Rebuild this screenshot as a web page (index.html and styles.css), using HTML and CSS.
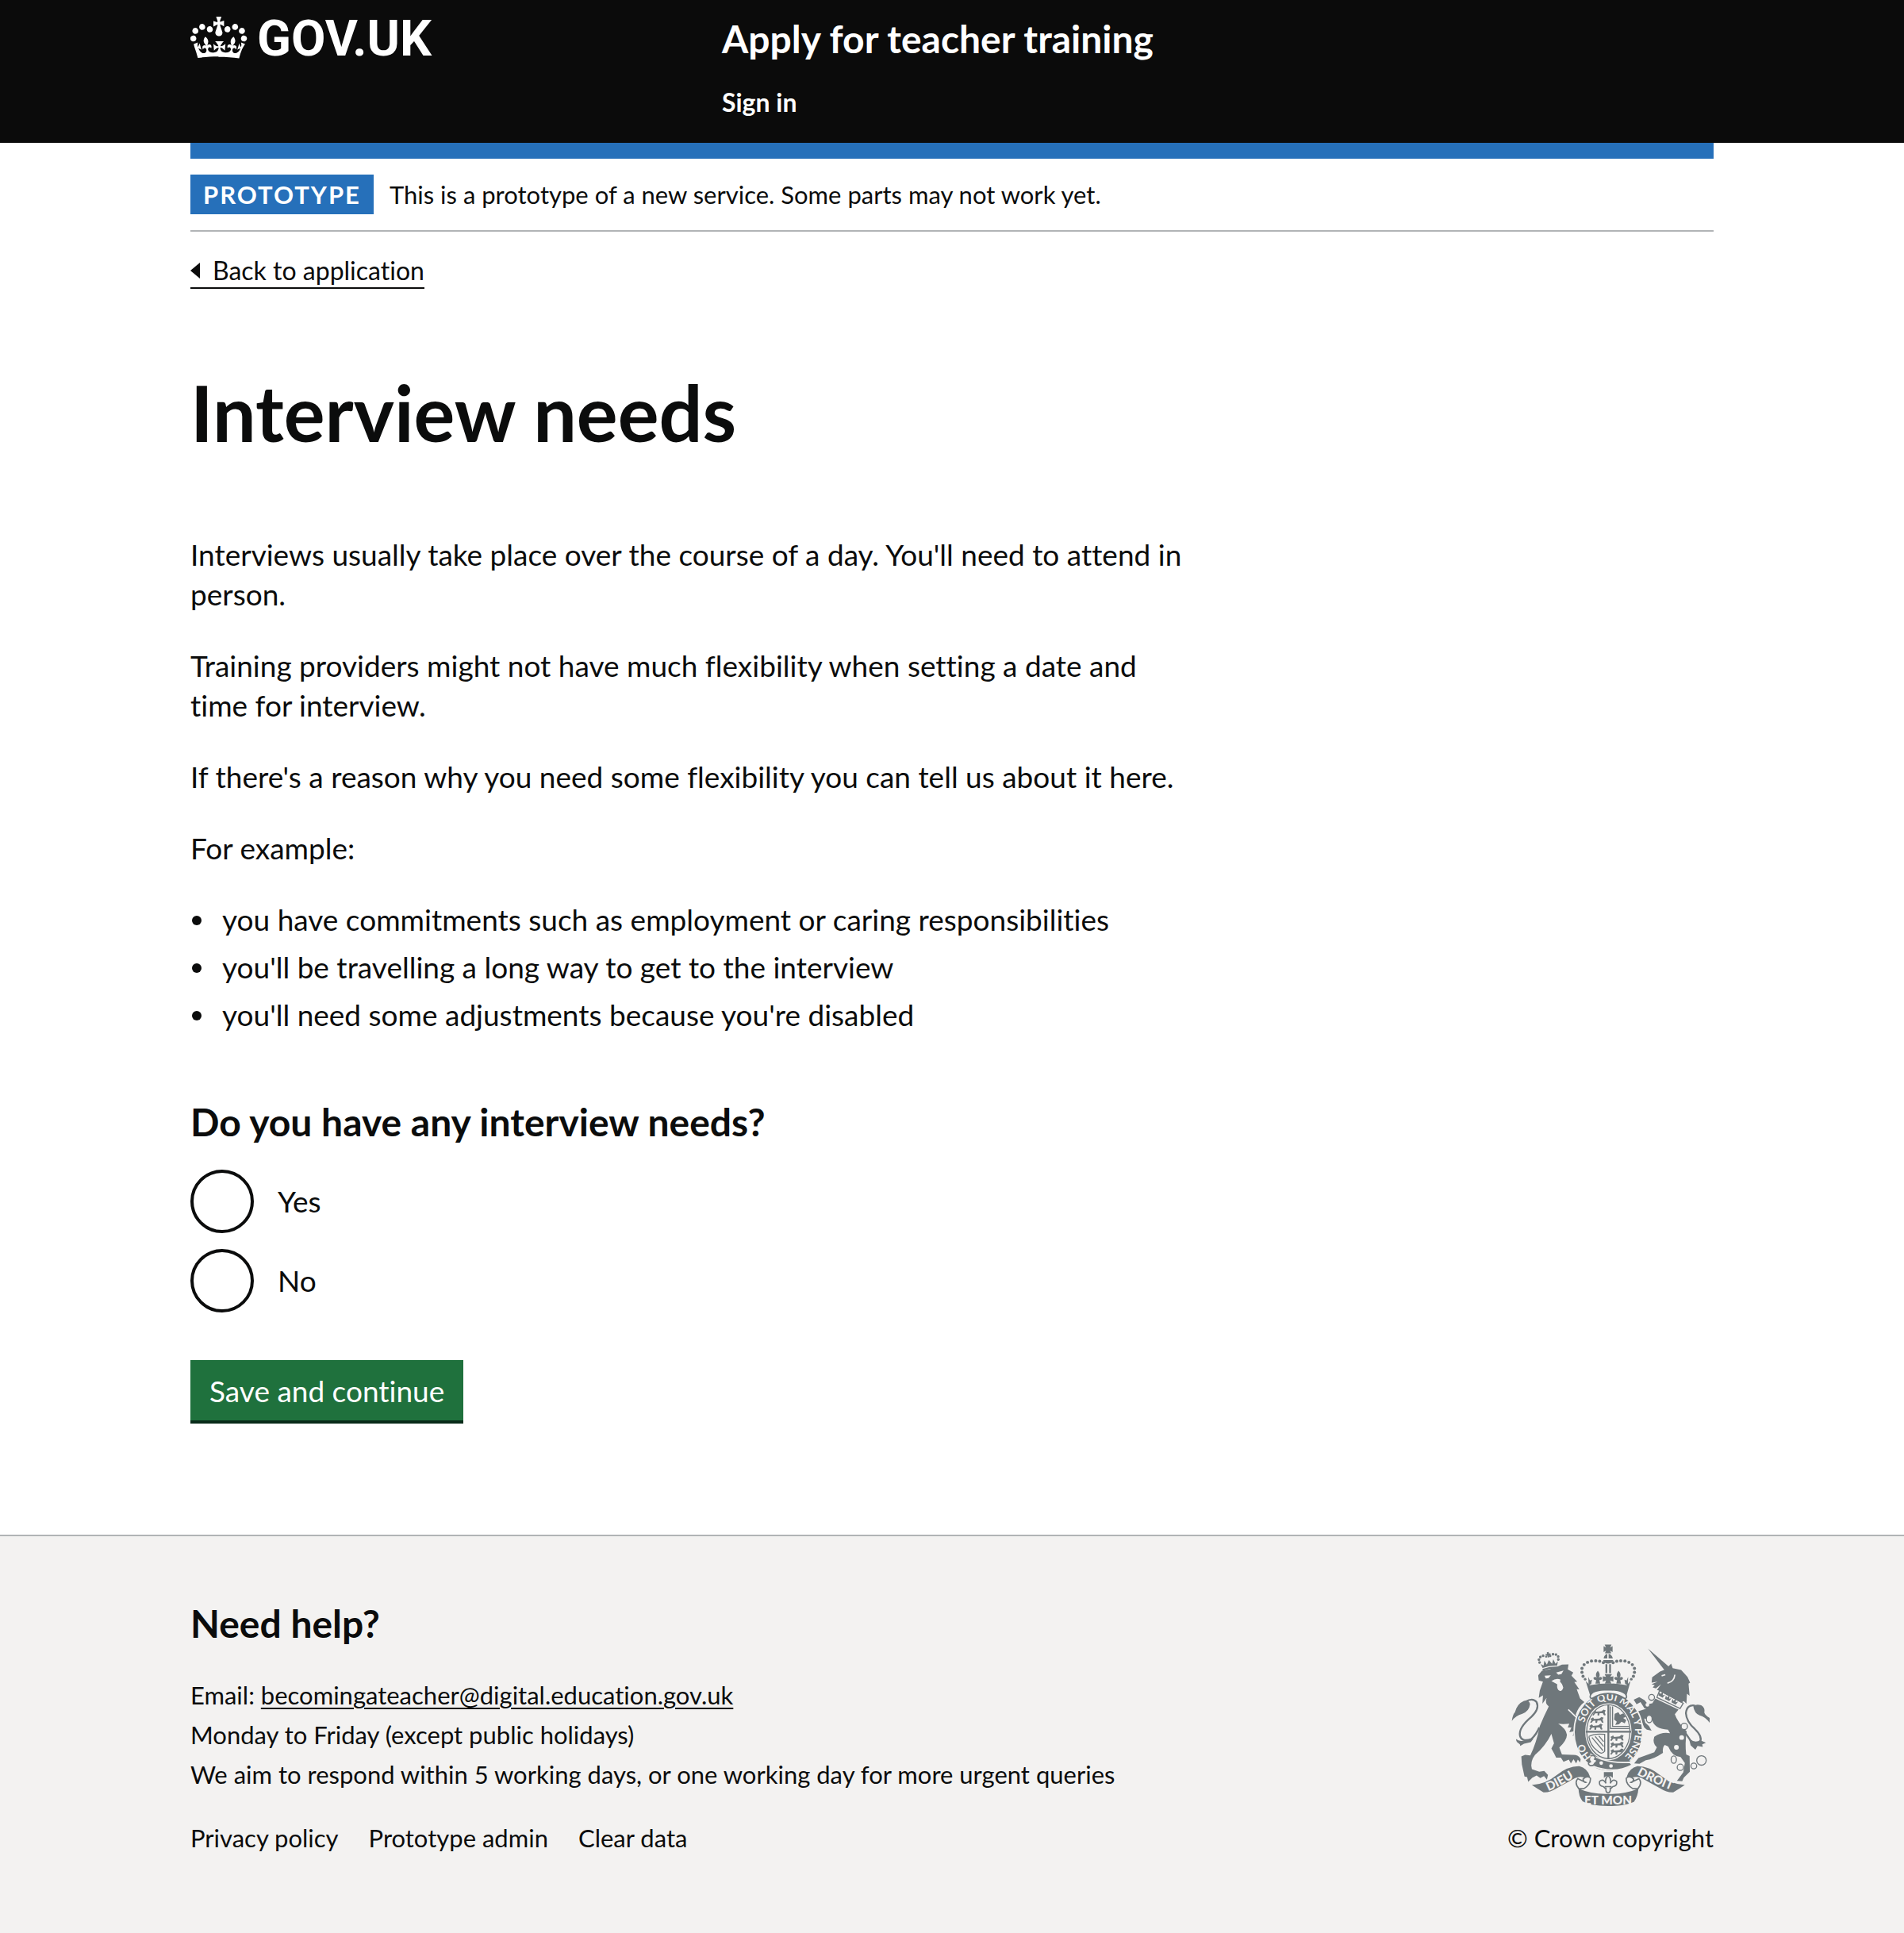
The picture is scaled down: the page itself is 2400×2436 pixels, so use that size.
FILE: index.html
```html
<!DOCTYPE html>
<html lang="en">
<head>
<meta charset="utf-8">
<meta name="viewport" content="width=device-width, initial-scale=1">
<title>Interview needs - Apply for teacher training - GOV.UK</title>
<link rel="stylesheet" href="styles.css">
</head>
<body>
<header class="header">
  <div class="container header-grid">
    <a class="logo" href="#">
      <svg class="crown" viewBox="0 4 36 26" aria-hidden="true"><path fill="currentColor" d="M6.7 12.2c1 .4 2.1-.1 2.5-1s-.1-2.1-1-2.5c-1-.4-2.1.1-2.5 1-.4 1 0 2.1 1 2.5m-4.3 2.5c1 .4 2.1-.1 2.5-1s-.1-2.1-1-2.5c-1-.4-2.1.1-2.5 1-.5 1 0 2.1 1 2.5m-1.3 4.8c1 .4 2.1-.1 2.5-1 .4-1-.1-2.1-1-2.5-1-.4-2.1.1-2.5 1-.4 1 0 2.1 1 2.5m10.4-5.8c1 .4 2.1-.1 2.5-1s-.1-2.1-1-2.5c-1-.4-2.1.1-2.5 1s0 2.1 1 2.5m17.4-1.5c-1 .4-2.1-.1-2.5-1s.1-2.1 1-2.5c1-.4 2.1.1 2.5 1 .5 1 0 2.1-1 2.5m4.3 2.5c-1 .4-2.1-.1-2.5-1s.1-2.1 1-2.5c1-.4 2.1.1 2.5 1 .5 1 0 2.1-1 2.5m1.3 4.8c-1 .4-2.1-.1-2.5-1-.4-1 .1-2.1 1-2.5 1-.4 2.1.1 2.5 1 .4 1 0 2.1-1 2.5m-10.4-5.8c-1 .4-2.1-.1-2.5-1s.1-2.1 1-2.5c1-.4 2.1.1 2.5 1s0 2.1-1 2.5m-5.3-4.9 2.4 1.3V6.5l-2.4.8c-.1-.1-.1-.2-.2-.3s1-3 1-3h-3.4l1 3c-.1.1-.2.1-.2.2-.1.1-.1.2-.1.3l-2.4-.7v3.5L17 9c.1.1.2.2.2.3l-1.4 4.2c-.1.2-.1.4-.1.6 0 1.1.8 2 1.9 2.2h.7c1-.2 1.9-1.1 1.9-2.1 0-.2 0-.4-.1-.6l-1.4-4.2c0-.1.1-.2.2-.3m-1 20.3c4.6 0 8.9.3 12.8.9 1.1-4.6 2.4-7.2 3.8-9.1l-2.6-.9c.3 1.3.3 1.9 0 2.8-.4-.4-.8-1.2-1.1-2.4l-1.2 4.2c.8-.5 1.4-.9 2-.9-1.2 2.6-2.7 3.2-3.6 3-1.2-.2-1.7-1.3-1.5-2.2.3-1.3 1.6-1.6 2.2-.1 1.2-2.4-.8-3.1-2.1-2.4 2-1.9 2.2-3.6.6-5.7-2.2 1.7-2.2 3.3-1.2 5.6-1.3-1.5-3.3-.7-2.5 1.7.9-1.4 2.1-.5 2 .8-.2 1.2-1.7 2.1-3.7 1.9-2.8-.3-2.9-2.2-3-3.1.7-.1 1.9.5 2.9 1.9l.4-4.3c-1.1 1.1-2.1 1.4-3.2 1.5.4-1.2 2.1-3.1 2.1-3.1h-5.4s1.8 1.9 2.1 3.1c-1.1 0-2.1-.2-3.2-1.5l.4 4.3c1-1.4 2.2-2 2.9-1.9-.1.9-.2 2.8-3 3.1-1.9.2-3.5-.7-3.7-1.9-.1-1.3 1.1-2.2 2-.8.8-2.4-1.2-3.2-2.5-1.7 1-2.2 1-3.9-1.2-5.6-1.6 2-1.4 3.8.6 5.7-1.3-.7-3.2 0-2.1 2.4.6-1.4 2-1.1 2.2.1.2.9-.3 2-1.5 2.2-.9.2-2.4-.5-3.6-3 .6 0 1.2.4 2 .9l-1.2-4.2c-.4 1.1-.8 1.9-1.1 2.4-.3-.9-.2-1.5 0-2.8l-2.6.9C2.3 22.9 3.6 25.5 4.7 30c3.9-.6 8.2-.9 12.8-.9"/></svg>
      <span>GOV.UK</span>
    </a>
    <div>
      <a class="service-name" href="#">Apply for teacher training</a>
      <nav><a class="nav-link" href="#">Sign in</a></nav>
    </div>
  </div>
</header>

<div class="container">
  <div class="phase-banner">
    <strong class="tag">PROTOTYPE</strong>
    <span>This is a prototype of a new service. Some parts may not work yet.</span>
  </div>
  <a class="back-link" href="#">Back to application</a>

  <main class="main">
    <h1>Interview needs</h1>
    <p>Interviews usually take place over the course of a day. You'll need to attend in person.</p>
    <p>Training providers might not have much flexibility when setting a date and time for interview.</p>
    <p>If there's a reason why you need some flexibility you can tell us about it here.</p>
    <p>For example:</p>
    <ul class="bullets">
      <li>you have commitments such as employment or caring responsibilities</li>
      <li>you'll be travelling a long way to get to the interview</li>
      <li>you'll need some adjustments because you're disabled</li>
    </ul>
    <form>
      <fieldset>
        <legend>Do you have any interview needs?</legend>
        <div class="radios">
          <div class="radio"><input type="radio" name="needs" id="needs-yes"><label for="needs-yes">Yes</label></div>
          <div class="radio"><input type="radio" name="needs" id="needs-no"><label for="needs-no">No</label></div>
        </div>
      </fieldset>
      <button class="button" type="button">Save and continue</button>
    </form>
  </main>
</div>

<footer class="footer">
  <div class="container footer-row">
    <div>
      <h2>Need help?</h2>
      <address>
        Email: <a class="email" href="mailto:becomingateacher@digital.education.gov.uk">becomingateacher@digital.education.gov.uk</a><br>
        Monday to Friday (except public holidays)<br>
        We aim to respond within 5 working days, or one working day for more urgent queries
      </address>
      <ul class="footer-links">
        <li><a href="#">Privacy policy</a></li>
        <li><a href="#">Prototype admin</a></li>
        <li><a href="#">Clear data</a></li>
      </ul>
    </div>
    <a class="copyright" href="#">
      <svg class="arms" viewBox="70 65 752 615" aria-hidden="true">
        <defs>
          <path id="garter-top" d="M347 362A98 118 0 1 1 496 493"/>
          <path id="garter-left" d="M374 492A98 118 0 0 1 341 418"/>
          <path id="ribbon-left" d="M211 621Q262 600 330 556"/>
          <path id="ribbon-right" d="M546 558Q610 594 700 626"/>
          <clipPath id="shield"><ellipse cx="438" cy="396" rx="80" ry="100"/></clipPath>
          <g id="arch">
            <circle cx="350" cy="197" r="5"/><circle cx="342" cy="186" r="6"/><circle cx="338" cy="171" r="6"/><circle cx="338" cy="156" r="6"/><circle cx="346" cy="142" r="6"/><circle cx="359" cy="133" r="6"/><circle cx="374" cy="128" r="6"/><circle cx="390" cy="127" r="6"/><circle cx="405" cy="129" r="6"/><circle cx="419" cy="134" r="6"/>
            <path d="M398 165q12 14 4 26q8-7 13 2q-2 9-11 7l3 14h-18l3-14q-9 2-11-7q5-9 13-2q-8-12 4-26zM362 188l6 14 8-3-3 16-10 4z"/>
          </g>
          <path id="passant" d="M0 8l10-6 4 6 20-2 8-6 8 3-4 8 4 10-6 1-5-8-12 0-2 9-6-1 0-8-9 1-6 8-5-2 5-8z"/>
          <path id="collar-crown" d="M0 18l-3-14 7 6 5-12 5 12 7-6-3 14z"/>
        </defs>

        <!-- lion -->
        <g transform="rotate(-9 214 135)">
          <circle cx="178" cy="128" r="5"/><circle cx="177" cy="117" r="5"/><circle cx="184" cy="108" r="5"/><circle cx="195" cy="105" r="5"/><circle cx="206" cy="110" r="4"/><circle cx="222" cy="110" r="4"/><circle cx="233" cy="105" r="5"/><circle cx="244" cy="108" r="5"/><circle cx="251" cy="117" r="5"/><circle cx="250" cy="128" r="5"/>
          <path d="M211 94h7v6h6v7h-6v7h-7v-7h-6v-7h6zM181 134l10 8 6-18 7 16 10-16 10 16 7-16 6 18 10-8-5 16q-28-6-56 0zM185 154q29-6 58 0v7q-29-6-58 0z"/>
        </g>
        <path d="M172 182L186 165Q226 160 262 142L287 141L284 160L305 172L298 184L320 206L309 208L328 236L318 235L331 270L347 284Q325 300 314 332L338 352L344 392L348 408L336 428L328 414L314 426L318 408L303 412L308 394L290 398L298 380L284 380L290 366Q265 368 248 366Q278 385 281 408Q280 430 252 456L262 482L300 484Q325 482 333 500L331 512L322 502L316 516L306 500L296 516L288 502L268 510L258 494L240 494L232 478L222 460L232 440L222 404Q200 450 160 484Q140 510 148 538L176 548L195 545L209 560L205 578L194 564L180 572L166 562L150 570L134 586L130 568L120 566L110 520L108 490L122 484L142 486Q165 440 178 375Q192 340 212 300Q196 290 204 268L188 290L190 258L174 268L178 240L190 206L174 202Z"/>
        <path class="gap" d="M196 184l24-2-9 11-10 1zM240 172l28-8-8 14-12 2zM222 204q18-13 34-6l-1 9q8 6 12 22q-4 15-14 12q-11-5-9-25z"/>
        <path class="gap-line" d="M286 312l50 48"/>
        <path d="M72 355Q76 328 84 322Q92 290 118 279Q140 277 141 292Q138 318 112 328Q85 336 72 355ZM88 424q14 12 34 4l32-6-10 14-26 6-14 8q0-8-6-10-10-4-10-16z"/>
        <path class="line" d="M124 282Q152 266 166 284Q178 310 146 340Q96 382 103 412Q110 436 146 424Q166 405 176 380"/>

        <!-- unicorn -->
        <path d="M588 81L668 150L652 164ZM602 210L604 190L634 168L655 160L676 138L682 155L714 162L738 188L748 210L742 214L746 260L736 252L734 290L724 280L714 286L630 240L622 238L638 216L618 232L606 228L614 220L602 216L625 206Z"/>
        <path class="gap-line" d="M690 180Q688 206 662 212M640 184l14-4"/>
        <path class="line thin" d="M632 240L722 288L710 308L622 266Z"/>
        <g transform="rotate(28 630 246)"><use href="#collar-crown" x="634" y="240"/><use href="#collar-crown" x="662" y="240"/><use href="#collar-crown" x="690" y="240"/></g>
        <path d="M616 270L704 312L690 330Q700 360 735 395Q728 440 733 482L746 488L747 548L724 570L718 584L698 582L722 550L728 515L712 492Q680 490 665 452L652 446Q642 456 645 476Q610 500 580 504L556 518L536 516L552 496L612 474L622 455Q604 440 612 415Q640 396 672 402L664 388Q610 385 604 350L574 346L578 362L592 375L602 392L584 388L574 380L560 348L544 330L552 318L578 310L600 296ZM534 275L555 265L575 276L588 292L604 288L602 306L575 308L560 284L545 292Z"/>
        <path d="M760 300Q770 290 790 296Q806 306 802 324Q806 334 822 344V362Q806 340 784 334Q764 326 760 300ZM744 424Q768 440 786 428L808 438L794 444L796 454L776 450L768 464L750 448Z"/>
        <path class="line" d="M766 297Q736 292 732 326Q734 358 766 386Q798 416 784 438Q768 448 750 430L724 392"/>
        <g class="link"><circle cx="602" cy="266" r="11"/><ellipse cx="593" cy="348" rx="11" ry="14"/><circle cx="726" cy="376" r="12"/><ellipse cx="686" cy="502" rx="10" ry="14"/><circle cx="711" cy="531" r="12"/><circle cx="762" cy="526" r="11"/><circle cx="791" cy="505" r="18"/></g>
        <g class="gap"><circle cx="716" cy="418" r="9"/><circle cx="696" cy="455" r="9"/><circle cx="586" cy="294" r="7"/></g>

        <!-- garter and shield -->
        <ellipse class="garter" cx="438" cy="397" rx="130" ry="149"/>
        <ellipse class="gap" cx="438" cy="396" rx="88" ry="108"/>
        <ellipse class="line thin" cx="438" cy="396" rx="82" ry="102"/>
        <g clip-path="url(#shield)">
          <g><use href="#passant" x="378" y="312"/><use href="#passant" x="370" y="340"/><use href="#passant" x="366" y="366"/><use href="#passant" x="446" y="408"/><use href="#passant" x="446" y="434"/><use href="#passant" x="446" y="460"/></g>
          <path class="line thin" d="M446 300V384H524M454 300V376H524"/>
          <path d="M462 328l14-6 6 10 14-6 8 14-10 4 12 8-6 12-12-6-10 10-14 2 6-12-10-8z"/>
          <path class="line thin" d="M364 414Q384 402 424 406V470Q412 486 396 468Q370 450 364 414M376 418L418 468M388 414L420 452M402 412L420 434"/>
        </g>
        <path class="line" d="M438 294V500M352 396H524"/>
        <path d="M322 392l16-2 8 14-6 22-10-12-14 12 4-18z"/>
        <path d="M372 482Q430 518 520 512L528 522Q460 560 372 524Z" class="strap"/>
        <circle class="gap" cx="411" cy="515" r="7"/><circle class="gap" cx="448" cy="526" r="7"/>
        <path class="buckle" d="M374 486q20 0 12 14q16 4 0 16q-4 12-18 8q-12-8 2-14q-10-12 4-24z"/>
        <text class="motto small"><textPath href="#garter-top">SOIT QUI MAL Y PENSE</textPath></text>
        <text class="motto small"><textPath href="#garter-left">HO</textPath></text>

        <!-- crown -->
        <path d="M424 66h26l-5 11 9-5v22l-9-5 4 10h-24l4-10-9 5v-22l9 5zM420 118q3-16 17-18q14 2 18 18zM418 124h39q-6 14-20 14t-19-14z"/>
        <path class="gap" d="M434 100h5v18h-5z"/>
        <path d="M427 140h7v34h-7zM441 140h7v34h-7zM424 178h28l-7 10 12-2v20l-12-4 4 12h-24l4-12-12 4v-20l12 2z"/>
        <use href="#arch"/><use href="#arch" transform="translate(875 0) scale(-1 1)"/>
        <path d="M352 204L368 220Q437 206 507 220L522 204L506 262Q437 232 370 262Z"/>
        <path class="buckle" d="M369 262Q372 238 437 237Q502 238 507 262Q508 270 500 270Q437 232 376 270Q368 270 369 262Z"/>

        <!-- motto ribbon -->
        <path d="M148 598Q200 595 240 562Q285 526 328 527Q358 534 368 566L355 574Q335 562 312 572Q280 590 240 612Q215 628 192 626Q172 614 148 598ZM728 598Q676 595 636 562Q591 526 548 527Q518 534 508 566L521 574Q541 562 564 572Q596 590 636 612Q661 628 684 626Q704 614 728 598ZM325 612Q375 634 437 632Q500 634 552 612Q550 642 535 662Q500 678 437 678Q370 678 340 660Q325 640 325 612Z"/>
        <path class="buckle" d="M322 574Q308 590 326 612L345 612Q372 596 370 572Q356 560 342 576Q346 590 352 588ZM554 574Q568 590 550 612L531 612Q504 596 506 572Q520 560 534 576Q530 590 524 588Z"/>
        <text class="motto"><textPath href="#ribbon-left">DIEU</textPath></text>
        <text class="motto"><textPath href="#ribbon-right">DROIT</textPath></text>
        <text class="motto" x="437" y="671" text-anchor="middle">ET MON</text>
        <path d="M421 549h34v22l-8-6h-18l-8 6z"/>
        <path class="buckle" d="M437 562q14 14 8 30q10-20 24-8q4 18-14 20l-6 6h-4q2 16-8 18q-10-2-8-18h-4l-6-6q-18-2-14-20q14-12 24 8q-6-16 8-30zM424 604h26"/>
      </svg>
      <span>© Crown copyright</span>
    </a>
  </div>
</footer>
</body>
</html>
```
FILE: styles.css
```css
:root {
  --ink: #0b0c0c;
  --blue: #2670ba;
  --rule: #b1b4b6;
  --panel: #f3f2f1;
  --crest: #6f777b;
}

* { box-sizing: border-box; }

html { background: var(--panel); }

body {
  margin: 0;
  background: #fff;
  color: var(--ink);
  font-family: Lato, "Liberation Sans", sans-serif;
  font-size: 37px;
  line-height: 50px;
  font-variant-ligatures: none;
}

a { color: inherit; text-decoration: none; }

.container { width: 80%; max-width: 1920px; margin: 0 auto; }

/* Header */
.header { background: #0b0b0b; color: #fff; font-weight: 700; }
.header-grid { display: grid; grid-template-columns: 670px 1fr; padding: 20px 0; }
.logo {
  display: flex;
  align-items: flex-start;
  align-self: start;
  gap: 12px;
  line-height: 58px;
  font-family: Roboto, "Liberation Sans", sans-serif;
  font-size: 63px;
}
.crown { width: 72px; height: 54px; }
.service-name { display: block; font-size: 48px; line-height: 58px; }
.nav-link { display: block; padding: 26px 0 6px; font-size: 32px; }

/* Phase banner */
.phase-banner {
  display: flex;
  align-items: center;
  gap: 20px;
  padding: 20px 0;
  border-top: 20px solid var(--blue);
  border-bottom: 2px solid var(--rule);
  font-size: 31px;
}
.tag { padding: 0 16px; background: var(--blue); color: #fff; letter-spacing: 2px; }

.back-link {
  display: inline-flex;
  align-items: center;
  gap: 16px;
  margin-top: 28px;
  border-bottom: 2px solid var(--ink);
  font-size: 32px;
  line-height: 42px;
}
.back-link::before {
  content: "";
  border: solid transparent;
  border-width: 10px 12px 10px 0;
  border-right-color: var(--ink);
}

/* Main */
.main { max-width: 1260px; padding: 106px 0 140px; }
h1 { margin: 0 0 104px; font-size: 97px; line-height: 100px; }
p { margin: 0 0 40px; }
ul { margin: 0; padding: 0; list-style: none; }
.bullets { margin-bottom: 80px; }
.bullets li { display: flex; margin-bottom: 10px; }
.bullets li::before {
  content: "";
  flex: none;
  width: 12px;
  height: 12px;
  margin: 20px 26px 0 2px;
  border-radius: 50%;
  background: var(--ink);
}

fieldset { margin: 0 0 60px; padding: 0; border: 0; }
legend { margin-bottom: 30px; padding: 0; font-size: 48px; font-weight: 700; line-height: 60px; }
.radios { display: grid; gap: 20px; }
.radio { display: flex; align-items: center; gap: 30px; }
.radio input {
  appearance: none;
  width: 80px;
  height: 80px;
  margin: 0;
  border: 4px solid var(--ink);
  border-radius: 50%;
  background: #fff;
}
.radio input:checked { box-shadow: inset 0 0 0 16px #fff; background: var(--ink); }

.button {
  display: block;
  padding: 14px 24px 12px;
  border: 0;
  border-bottom: 4px solid #082b19;
  background: #1f713d;
  color: #fff;
  font: inherit;
  cursor: pointer;
}

/* Footer */
.footer { padding: 80px 0 95px; border-top: 2px solid var(--rule); background: var(--panel); font-size: 31px; }
.footer-row { display: flex; justify-content: space-between; align-items: flex-end; }
h2 { margin: 0 0 35px; font-size: 48px; line-height: 60px; }
address { margin-bottom: 30px; font-style: normal; }
.email { text-decoration: underline; text-decoration-thickness: 2px; text-underline-offset: 4px; }
.footer-links { display: flex; gap: 38px; }

.copyright { display: flex; flex-direction: column; align-items: center; gap: 14px; }
.arms { width: 250px; height: 205px; fill: var(--crest); }
.arms .gap { fill: var(--panel); }
.arms .gap-line { fill: none; stroke: var(--panel); stroke-width: 5; }
.arms .line { fill: none; stroke: var(--crest); stroke-width: 7; }
.arms .thin { stroke-width: 4; }
.arms .link { fill: var(--panel); stroke: var(--crest); stroke-width: 4; }
.arms .garter, .arms .strap { stroke: var(--panel); stroke-width: 5; }
.arms .buckle { fill: var(--panel); stroke: var(--crest); stroke-width: 5; }
.motto { fill: var(--panel); font-size: 46px; font-weight: 900; }
.motto.small { font-size: 38px; font-weight: 700; }
```
